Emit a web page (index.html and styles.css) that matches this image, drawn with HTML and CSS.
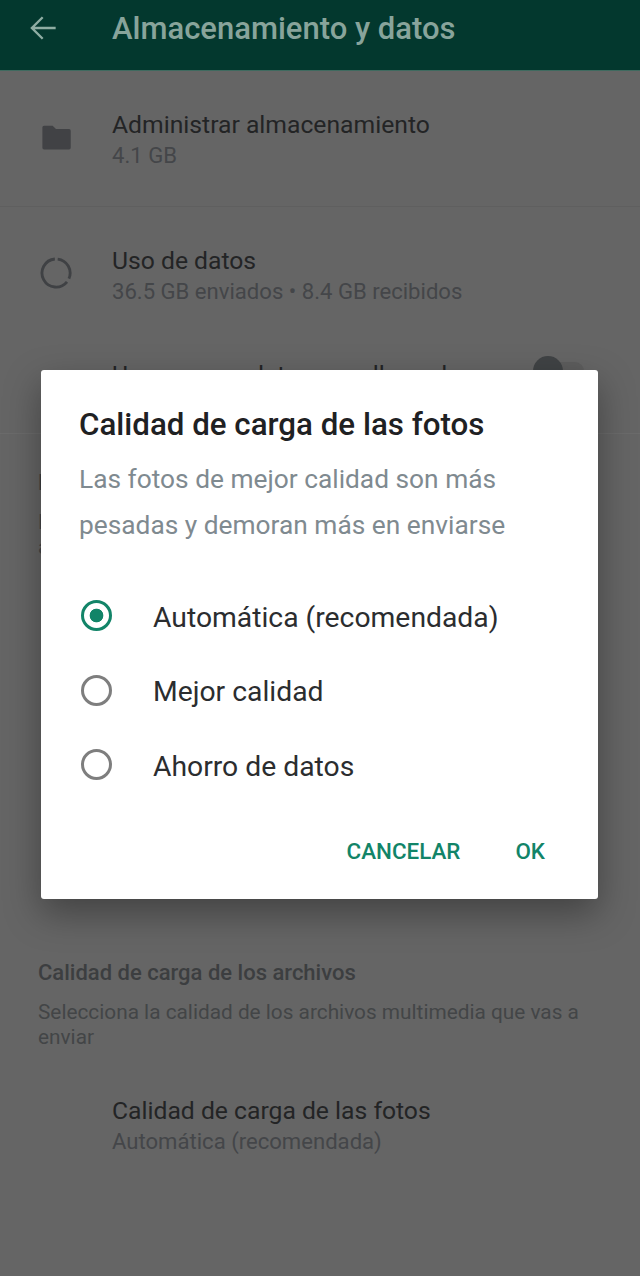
FILE: index.html
```html
<!DOCTYPE html>
<html lang="es">
<head>
<meta charset="utf-8">
<title>Almacenamiento y datos</title>
<link rel="stylesheet" href="styles.css">
</head>
<body>
<div class="screen">
  <header class="appbar">
    <svg class="back" viewBox="0 0 24 24" width="38" height="38"><path d="M20 12H5.500M11.800 5.200 5 12l6.800 6.800" fill="none" stroke="currentColor" stroke-width="1.500"/></svg>
    <h1 class="appbar-title">Almacenamiento y datos</h1>
  </header>
  <section class="group group-storage">
    <div class="row">
      <svg class="row-icon" viewBox="0 0 30 30" width="34" height="34"><path d="M3 6.500a1.500 1.500 0 0 1 1.500-1.500h7.500l3 3h11.500a1.500 1.500 0 0 1 1.500 1.500v15a1.500 1.500 0 0 1-1.500 1.500h-22a1.500 1.500 0 0 1-1.500-1.500z" fill="#414245"/></svg>
      <div class="row-text">
        <div class="row-title">Administrar almacenamiento</div>
        <div class="row-sub">4.1 GB</div>
      </div>
    </div>
  </section>
  <section class="group group-usage">
    <div class="row">
      <svg class="row-icon" viewBox="0 0 30 30" width="34" height="34"><g fill="none" stroke="#3f4144" stroke-width="2.500"><path d="M16.500 2.700A12.400 12.400 0 0 1 26.400 20"/><path d="M24.700 22.800A12.400 12.400 0 1 1 14 2.650"/></g></svg>
      <div class="row-text">
        <div class="row-title">Uso de datos</div>
        <div class="row-sub">36.5 GB enviados • 8.4 GB recibidos</div>
      </div>
    </div>
    <div class="row-toggle">
      <div class="row-title">Usar menos datos para llamadas</div>
      <span class="toggle"><span class="toggle-thumb"></span></span>
    </div>
  </section>
  <section class="group group-auto">
    <div class="label">Descarga automática</div>
    <div class="desc desc-auto">Los mensajes de voz se descargan automáticamente</div>
  </section>
  <section class="group-quality">
    <div class="label">Calidad de carga de los archivos</div>
    <div class="desc">Selecciona la calidad de los archivos multimedia que vas a enviar</div>
    <div class="row-quality">
      <div class="row-text">
        <div class="row-title">Calidad de carga de las fotos</div>
        <div class="row-sub">Automática (recomendada)</div>
      </div>
    </div>
  </section>

  <div class="dialog">
    <h2 class="dialog-title">Calidad de carga de las fotos</h2>
    <p class="dialog-text">Las fotos de mejor calidad son más pesadas y demoran más en enviarse</p>
    <div class="options">
      <div class="option"><span class="radio radio-on"></span><span>Automática (recomendada)</span></div>
      <div class="option"><span class="radio"></span><span>Mejor calidad</span></div>
      <div class="option"><span class="radio"></span><span>Ahorro de datos</span></div>
    </div>
    <div class="actions">
      <span class="action">CANCELAR</span>
      <span class="action">OK</span>
    </div>
  </div>
</div>
</body>
</html>
```

FILE: styles.css
```css
* { box-sizing: border-box; }
html, body { margin: 0; padding: 0; }
body { background: #656565; font-family: Roboto, "Noto Sans", sans-serif; }
.screen { position: relative; width: 640px; height: 1276px; overflow: hidden; background: #656565; }

.appbar { height: 71px; background: #03382e; border-bottom: 1px solid #3f6a5f; display: flex; align-items: center; padding: 0 0 14px 24px; gap: 50px; color: #8fada3; }
.back { flex: none; }
.appbar-title { margin: 0; font-size: 31px; font-weight: 500; color: #88a49b; white-space: nowrap; }

.group-storage { height: 136px; border-bottom: 1px solid #5f5f5f; }
.group-usage { height: 227px; border-bottom: 1px solid #6b6b6b; }
.row { display: flex; align-items: flex-start; padding: 38px 0 0 39px; gap: 39px; }
.row-icon { flex: none; margin-top: 11px; }
.row-text { line-height: 31px; }
.row-title { font-size: 24.700px; line-height: 31px; color: #232425; white-space: nowrap; }
.row-sub { font-size: 22.100px; color: #444649; white-space: nowrap; }
.row-toggle { display: flex; align-items: center; justify-content: space-between; padding: 52px 56px 0 112px; }
.toggle { display: flex; align-items: center; width: 44px; height: 18px; margin-top: -8px; border-radius: 9px; background: #5d5d5d; }
.toggle-thumb { flex: none; width: 30px; height: 30px; margin-left: -7px; border-radius: 50%; background: #404345; }

.group-auto { height: 526px; padding: 36px 0 0 38px; }
.desc-auto { width: 440px; }
.group-quality { padding: 0 38px; }
.label { font-size: 22px; line-height: 26px; color: #3c3e40; font-weight: 500; white-space: nowrap; }
.desc { font-size: 20.800px; line-height: 25px; color: #434547; margin-top: 13.500px; }
.row-quality { padding: 45px 0 0 74px; }

.dialog { position: absolute; left: 41px; top: 370px; width: 557px; height: 529px; background: #fff; border-radius: 3px; box-shadow: 0 14px 36px rgba(0,0,0,.35); padding: 35px 38px 0; }
.dialog-title { margin: 0; font-size: 31.300px; line-height: 40px; font-weight: 500; color: #1f2123; white-space: nowrap; }
.dialog-text { margin: 11px 0 0; font-size: 26.300px; line-height: 46px; color: #7f8a90; }
.options { margin-top: 32px; }
.option { display: flex; align-items: center; height: 74.500px; gap: 41px; font-size: 28.300px; color: #2b2d2f; white-space: nowrap; }
.radio { flex: none; width: 31px; height: 31px; margin: -3px 0 0 2px; border: 3px solid #7e7e7e; border-radius: 50%; }
.radio-on { border-color: #128468; background: radial-gradient(circle, #128468 0 6.500px, #fff 7.200px); }
.actions { display: flex; justify-content: flex-end; gap: 55px; margin-top: 32.500px; padding-right: 15px; }
.action { font-size: 22.400px; font-weight: 500; color: #128468; line-height: 30px; }
```
